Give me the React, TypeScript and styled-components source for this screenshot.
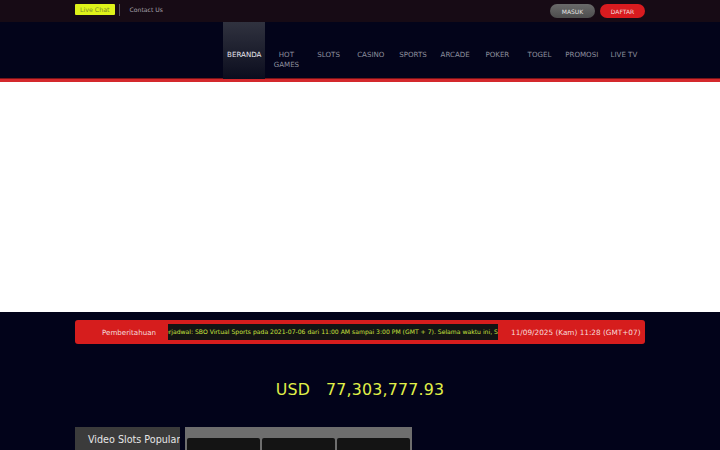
import styled, { createGlobalStyle } from "styled-components";

const GlobalStyle = createGlobalStyle`
  html, body {
    margin: 0;
    padding: 0;
    background: #02031a;
    font-family: "DejaVu Sans", "Liberation Sans", sans-serif;
  }
  * { box-sizing: border-box; }
`;

const Page = styled.div`
  width: 720px;
  min-height: 450px;
  background: #02031a;
  overflow: hidden;
`;

const Container = styled.div`
  width: 570px;
  margin: 0 auto;
`;

const TopBar = styled.div`
  height: 22px;
  background: #170b15;
`;

const TopInner = styled(Container)`
  height: 100%;
  display: flex;
  align-items: center;
  justify-content: space-between;
`;

const TopLeft = styled.div`
  display: flex;
  align-items: center;
  height: 100%;
`;

const LiveChat = styled.span`
  background: #def21a;
  color: #7c8a2a;
  font-size: 6.3px;
  line-height: 11px;
  padding: 0 5px;
  border-radius: 1px;
  margin-top: -3px;
`;

const Divider = styled.span`
  width: 1px;
  height: 12px;
  background: #55505a;
  margin: -2px 10px 0 4px;
`;

const TopLink = styled.span`
  color: #a8a4ac;
  font-size: 6.1px;
  margin-top: -4px;
`;

const AuthRow = styled.div`
  display: flex;
  gap: 5px;
`;

const AuthBtn = styled.button<{ $primary?: boolean }>`
  width: 45px;
  height: 14px;
  border: none;
  border-radius: 8px;
  padding: 0;
  font-family: inherit;
  font-size: 6px;
  color: ${(p) => (p.$primary ? "#f3dcdc" : "#e4e4e4")};
  background: ${(p) =>
    p.$primary ? "#d81b1f" : "linear-gradient(180deg, #6a6a6a 0%, #4d4d4d 100%)"};
`;

const NavBar = styled.div`
  height: 60px;
  background: #03041a;
  border-bottom: 3px solid #d4292d;
  box-shadow: inset 0 -1px 0 #7a1418;
`;

const NavInner = styled(Container)`
  height: 57px;
  display: flex;
  justify-content: flex-end;
`;

const NavItem = styled.div<{ $active?: boolean }>`
  width: 42.2px;
  height: 100%;
  display: flex;
  align-items: flex-start;
  justify-content: center;
  padding-top: 28px;
  text-align: center;
  font-size: 7.1px;
  line-height: 10px;
  color: ${(p) => (p.$active ? "#e8e8ee" : "#8e909e")};
  background: ${(p) =>
    p.$active ? "linear-gradient(180deg, #30323f 0%, #1a1c2b 60%, #0b0d1e 100%)" : "transparent"};
`;

const Banner = styled.div`
  height: 230px;
  background: #ffffff;
`;

const Notice = styled(Container)`
  margin-top: 8px;
  height: 24px;
  background: #d61d1d;
  border-radius: 3px;
  display: flex;
  align-items: center;
`;

const NoticeLabel = styled.div`
  width: 93px;
  padding-left: 27px;
  color: #f4dede;
  font-size: 7.1px;
`;

const Marquee = styled.div`
  width: 330px;
  height: 16px;
  background: #141414;
  color: #c9e23e;
  font-size: 6.1px;
  line-height: 16px;
  white-space: nowrap;
  overflow: hidden;
`;

const MarqueeText = styled.span`
  display: inline-block;
  margin-left: -3px;
`;

const NoticeDate = styled.div`
  flex: 1;
  padding-left: 13px;
  color: #f6dcdc;
  font-size: 7.3px;
  white-space: nowrap;
`;

const Jackpot = styled.div`
  height: 66px;
  display: flex;
  align-items: center;
  justify-content: center;
  gap: 16px;
  padding-top: 25px;
  color: #e0f048;
  font-size: 15.8px;
  letter-spacing: 0.2px;
`;

const GamesRow = styled(Container)`
  margin-top: 17px;
  display: flex;
  gap: 5px;
  align-items: flex-start;
`;

const CategoryTab = styled.div`
  width: 105px;
  height: 30px;
  background: #3b3b3b;
  color: #e6e6e6;
  font-size: 9.6px;
  padding: 7px 0 0 13px;
  white-space: nowrap;
  overflow: hidden;
`;

const GamePanel = styled.div`
  width: 227px;
  background: #6e6e6e;
  padding-top: 11px;
  padding-left: 2px;
  display: grid;
  grid-template-columns: repeat(3, 73px);
  gap: 2px;
`;

const GameCell = styled.div`
  height: 30px;
  background: #141414;
  border-radius: 2px 2px 0 0;
`;

const navItems = ["BERANDA", "HOT GAMES", "SLOTS", "CASINO", "SPORTS", "ARCADE", "POKER", "TOGEL", "PROMOSI", "LIVE TV"];

export default function App() {
  return (
    <Page>
      <GlobalStyle />
      <TopBar>
        <TopInner>
          <TopLeft>
            <LiveChat>Live Chat</LiveChat>
            <Divider />
            <TopLink>Contact Us</TopLink>
          </TopLeft>
          <AuthRow>
            <AuthBtn>MASUK</AuthBtn>
            <AuthBtn $primary>DAFTAR</AuthBtn>
          </AuthRow>
        </TopInner>
      </TopBar>

      <NavBar>
        <NavInner>
          {navItems.map((item, i) => (
            <NavItem key={item} $active={i === 0}>
              {item}
            </NavItem>
          ))}
        </NavInner>
      </NavBar>

      <Banner />

      <Notice>
        <NoticeLabel>Pemberitahuan</NoticeLabel>
        <Marquee>
          <MarqueeText>
            erjadwal: SBO Virtual Sports pada 2021-07-06 dari 11:00 AM sampai 3:00 PM (GMT + 7). Selama waktu ini, SBO Virtual Sports tidak akan tersedia.
          </MarqueeText>
        </Marquee>
        <NoticeDate>11/09/2025 (Kam) 11:28 (GMT+07)</NoticeDate>
      </Notice>

      <Jackpot>
        <span>USD</span>
        <span>77,303,777.93</span>
      </Jackpot>

      <GamesRow>
        <CategoryTab>Video Slots Popular</CategoryTab>
        <GamePanel>
          <GameCell />
          <GameCell />
          <GameCell />
        </GamePanel>
      </GamesRow>
    </Page>
  );
}
